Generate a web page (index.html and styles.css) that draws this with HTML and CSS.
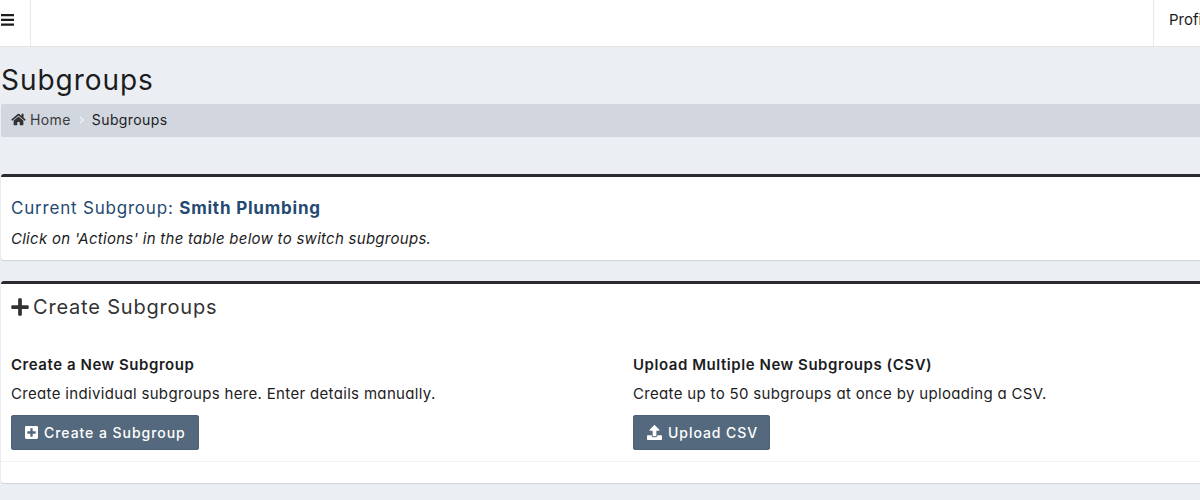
FILE: index.html
```html
<!DOCTYPE html>
<html lang="en">
  <head>
    <meta charset="UTF-8" />
    <meta name="viewport" content="width=device-width, initial-scale=1.0"/>
    <title>Subgroups</title>
    <link rel="stylesheet" href="styles.css">
  </head>

  <body>
    <header class="navbar">
      <a class="sidebar-toggle" title="Toggle navigation">
        <svg class="icon-bars" viewBox="0 0 13 12"><path d="M0 0h13v2.3H0zM0 4.7h13V7H0zM0 9.4h13v2.3H0z"/></svg>
      </a>
      <a class="profile">Profi</a>
    </header>

    <main class="content">
      <h1>Subgroups</h1>

      <nav class="breadcrumb">
        <svg class="icon-home" viewBox="0 0 576 512"><path d="M280.4 148.3L96 300.1V464a16 16 0 0 0 16 16l112-.3a16 16 0 0 0 16-16V368a16 16 0 0 1 16-16h64a16 16 0 0 1 16 16v95.6a16 16 0 0 0 16 16.1l112 .3a16 16 0 0 0 16-16V300L295.7 148.3a12.2 12.2 0 0 0-15.3 0zM571.6 251.5L488 182.6V44a12 12 0 0 0-12-12h-56a12 12 0 0 0-12 12v72.6L318.5 43a48 48 0 0 0-61 0L4.3 251.5a12 12 0 0 0-1.6 16.9l25.5 31a12 12 0 0 0 16.9 1.6l235.2-193.7a12.2 12.2 0 0 1 15.3 0L530.9 301a12 12 0 0 0 16.9-1.6l25.5-31a12 12 0 0 0-1.7-16.9z"/></svg>
        <a class="crumb-home">Home</a>
        <svg class="icon-angle" viewBox="0 0 5 8"><path d="M1 1l3 3-3 3"/></svg>
        <span>Subgroups</span>
      </nav>

      <section class="box box-current">
        <h2>Current Subgroup: <strong>Smith Plumbing</strong></h2>
        <p><em>Click on 'Actions' in the table below to switch subgroups.</em></p>
      </section>

      <section class="box box-create">
        <h3>
          <svg class="icon-plus" viewBox="0 0 448 512"><path d="M416 208H272V64c0-17.7-14.3-32-32-32h-32c-17.7 0-32 14.3-32 32v144H32c-17.7 0-32 14.3-32 32v32c0 17.7 14.3 32 32 32h144v144c0 17.7 14.3 32 32 32h32c17.7 0 32-14.3 32-32V304h144c17.7 0 32-14.3 32-32v-32c0-17.7-14.3-32-32-32z"/></svg>
          <span>Create Subgroups</span>
        </h3>

        <div class="row">
          <div class="col">
            <h4>Create a New Subgroup</h4>
            <p>Create individual subgroups here. Enter details manually.</p>
            <a class="btn btn-new">
              <svg class="icon-square" viewBox="0 0 448 512"><path d="M400 32H48C21.500 32 0 53.500 0 80v352c0 26.500 21.500 48 48 48h352c26.500 0 48-21.500 48-48V80c0-26.500-21.500-48-48-48zm-32 252c0 6.600-5.400 12-12 12h-92v92c0 6.600-5.400 12-12 12h-56c-6.600 0-12-5.400-12-12v-92H92c-6.600 0-12-5.400-12-12v-56c0-6.600 5.400-12 12-12h92v-92c0-6.600 5.400-12 12-12h56c6.600 0 12 5.400 12 12v92h92c6.600 0 12 5.400 12 12v56z"/></svg>
              <span>Create a Subgroup</span>
            </a>
          </div>
          <div class="col">
            <h4>Upload Multiple New Subgroups (CSV)</h4>
            <p>Create up to 50 subgroups at once by uploading a CSV.</p>
            <a class="btn btn-csv">
              <svg class="icon-upload" viewBox="0 0 512 512"><path d="M296 384h-80c-13.300 0-24-10.700-24-24V192h-87.700c-17.800 0-26.700-21.500-14.100-34.100L242.300 5.700c7.500-7.500 19.800-7.500 27.300 0l152.200 152.200c12.600 12.600 3.700 34.100-14.100 34.100H320v168c0 13.300-10.700 24-24 24zm216-8v112c0 13.300-10.700 24-24 24H24c-13.300 0-24-10.700-24-24V376c0-13.300 10.700-24 24-24h136v8c0 30.900 25.100 56 56 56h80c30.900 0 56-25.100 56-56v-8h136c13.300 0 24 10.700 24 24z"/></svg>
              <span>Upload CSV</span>
            </a>
          </div>
        </div>
      </section>
    </main>
  </body>
</html>
```

FILE: styles.css
```css
* {
  box-sizing: border-box;
}

body {
  margin: 0;
  height: 100vh;
  overflow: hidden;
  background-color: #ebeff3;
  color: #1c1c1e;
  font-family: Inter, sans-serif;
  font-size: 15px;
  font-feature-settings: "cv11";
}

h1, h2, h3, h4, p {
  margin: 0;
  font-weight: 400;
}

h1, h2, h3, h4, .btn {
  font-feature-settings: normal;
}

svg {
  display: block;
  flex: none;
  fill: currentColor;
}

.navbar {
  display: flex;
  justify-content: space-between;
  height: 47px;
  background-color: #fff;
  border-bottom: 1px solid #e2e4e6;
}

.sidebar-toggle {
  width: 31px;
  padding: 14px 0 0 1px;
  border-right: 1px solid #e8e9eb;
}

.icon-bars {
  width: 13px;
  height: 12px;
}

.profile {
  width: 47px;
  padding-left: 15px;
  border-left: 1px solid #e8e9eb;
  line-height: 39px;
}

.content {
  padding-left: 1px;
}

h1 {
  height: 57px;
  padding-top: 15px;
  font-size: 28px;
  line-height: 36px;
  letter-spacing: 0.95px;
}

.breadcrumb {
  display: flex;
  align-items: center;
  height: 33px;
  padding: 0 0 2px 10px;
  background-color: #d2d6df;
  border-radius: 2px 0 0 2px;
  font-size: 14px;
  letter-spacing: 0.4px;
}

.icon-home {
  width: 15px;
  height: 13px;
  margin-right: 4px;
  color: #333;
}

.crumb-home {
  color: #3a3a3c;
}

.icon-angle {
  width: 5px;
  height: 8px;
  margin: 0 8px;
  fill: none;
  stroke: #edf0f5;
  stroke-width: 1.3;
}

.box {
  background-color: #fff;
  border-top: 3px solid #2b2b2d;
  border-radius: 3px 0 0 3px;
  box-shadow: 0 1px 1px rgba(0, 0, 0, 0.12);
}

.box-current {
  height: 86px;
  margin-top: 37px;
  padding: 18px 0 0 10px;
}

h2 {
  font-size: 17px;
  line-height: 26px;
  letter-spacing: 0.8px;
  color: #244a73;
}

.box-current p {
  margin-top: 6px;
  line-height: 24px;
  letter-spacing: 0.27px;
}

.box-create {
  height: 202px;
  margin-top: 21px;
}

h3 {
  display: flex;
  align-items: center;
  height: 46px;
  padding-left: 10px;
  font-size: 20px;
  letter-spacing: 0.8px;
  color: #333;
}

.icon-plus {
  width: 18px;
  height: 20px;
  margin-right: 4px;
}

.row {
  display: flex;
  height: 132px;
  padding: 23px 0 0 10px;
  border-bottom: 1px solid #f0f2f4;
}

.col {
  flex: none;
  width: 622px;
}

h4 {
  font-size: 15px;
  font-weight: 600;
  line-height: 24px;
  letter-spacing: 0.55px;
}

.col p {
  margin-top: 4px;
  line-height: 26px;
  letter-spacing: 0.33px;
}

.btn {
  display: flex;
  align-items: center;
  height: 35px;
  margin-top: 8px;
  padding-left: 14px;
  background-color: #54697e;
  border-radius: 3px;
  box-shadow: inset 0 0 0 1px #4d6278;
  color: #fff;
  font-size: 14px;
  font-weight: 500;
  letter-spacing: 0.95px;
}

.btn-new {
  width: 188px;
}

.btn-csv {
  width: 137px;
}

.icon-square {
  width: 13px;
  height: 15px;
  margin-right: 6px;
}

.icon-upload {
  width: 15px;
  height: 15px;
  margin-right: 6px;
}
```
